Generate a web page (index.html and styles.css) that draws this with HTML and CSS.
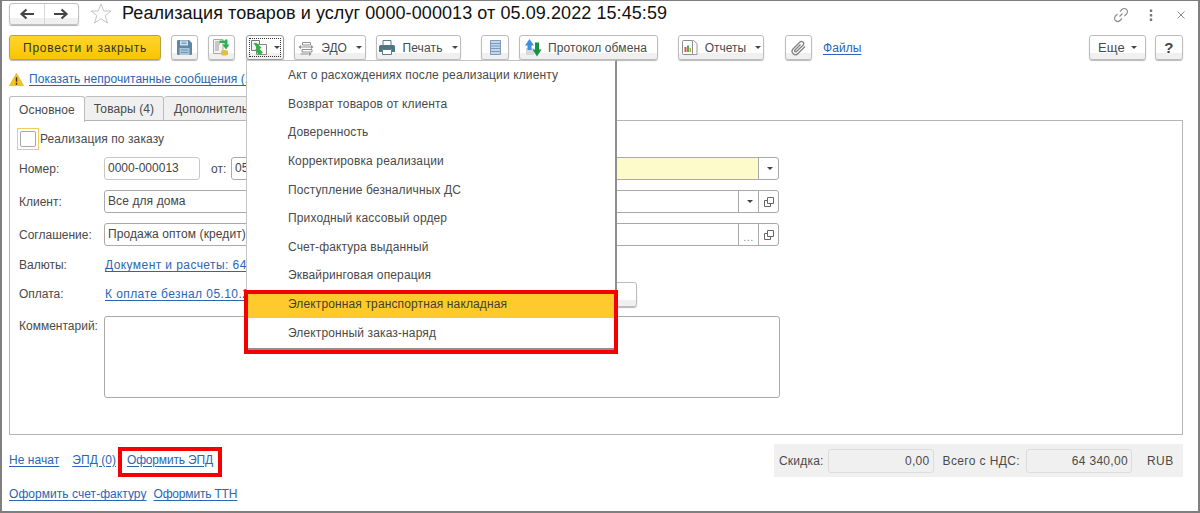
FILE: index.html
```html
<!DOCTYPE html>
<html lang="ru">
<head>
<meta charset="utf-8">
<title>Реализация товаров и услуг</title>
<link rel="stylesheet" href="styles.css">
</head>
<body>
<div class="window">
  <header class="titlebar">
    <div class="nav">
      <button class="nav-btn"><svg width="16" height="12" viewBox="0 0 16 12"><path d="M15 6H4M7.500 1.500 2.500 6l5 4.500" fill="none" stroke="#444" stroke-width="2.200"/></svg></button>
      <button class="nav-btn"><svg width="16" height="12" viewBox="0 0 16 12"><path d="M1 6h11M8.500 1.500l5 4.500-5 4.500" fill="none" stroke="#444" stroke-width="2.200"/></svg></button>
    </div>
    <svg class="star" width="24" height="24" viewBox="0 0 24 24"><path d="M12 2l2.800 7h7.200l-5.800 4.600 2.200 7.400-6.400-4.300-6.400 4.300 2.200-7.400L2 9h7.200z" fill="#fff" stroke="#c4c4c4"/></svg>
    <h1 class="title">Реализация товаров и услуг 0000-000013 от 05.09.2022 15:45:59</h1>
    <div class="win-tools">
      <svg width="16" height="16" viewBox="0 0 16 16"><path d="M6.500 9.500 9.500 6.500M7 4.500l2-2a3 3 0 0 1 4.500 4.500l-2 2M9 11.500l-2 2A3 3 0 0 1 2.500 9l2-2" fill="none" stroke="#8c8c8c" stroke-width="1.100"/></svg>
      <svg width="4" height="12" viewBox="0 0 4 12"><path d="M2 0.500v2.500M2 5v2.500M2 9.500v2.500" stroke="#777" stroke-width="2.400"/></svg>
      <svg width="10" height="10" viewBox="0 0 10 10"><path d="M1.500 1.500l7 7M8.500 1.500l-7 7" stroke="#8a8a8a" stroke-width="1"/></svg>
    </div>
  </header>

  <div class="toolbar">
    <button class="btn btn-primary">Провести и закрыть</button>
    <button class="btn btn-icon gap-10"><svg width="15" height="15" viewBox="0 0 15 15"><path d="M0 1q0-1 1-1h11l3 3v11q0 1-1 1H1q-1 0-1-1z" fill="#5f87a3"/><path d="M3 .500h8v5H3z" fill="#cfe0ec"/><path d="M4.500 2h5M4.500 3.500h5" stroke="#7fa3ba"/><path d="M2.500 8h10v7h-10z" fill="#a9c6d8"/><path d="M4 10h7M4 12.500h7" stroke="#6f97b0"/></svg></button>
    <button class="btn btn-icon gap-10"><svg width="17" height="17" viewBox="0 0 17 17"><path d="M.500.500h9.500v14H.500z" fill="#f4f4f4" stroke="#a8a8a8"/><path d="M2 3h5M2 5h5M2 7h4M2 9h4M2 11h4" stroke="#9a9a9a"/><path d="M8 12.500q0-1.500 3.500-1.500t3.500 1.500v2.500q0 1.500-3.500 1.500T8 15z" fill="#e4bf3a"/><path d="M6.500 1.500h5.500v-1h2.500v5h2l-3.500 5-3.700-5h2.200V4H6.500z" fill="#2fb04f"/></svg></button>
    <div class="menu-anchor gap-11">
      <button class="btn btn-create">
        <span class="focus-ring">
          <svg width="17" height="16" viewBox="0 0 17 16"><path d="M.500.500h8v10h-8z" fill="#f2f2f2" stroke="#777"/><path d="M5.500 4.500h10v10h-10z" fill="#fff" stroke="#888"/><path d="M2.500 3h3l5 4.500-2 1.700 3.500 3-1.800 1.800H7L4 10l2-1.800z" fill="#2fb344"/></svg>
          <i class="caret"></i>
        </span>
      </button>
      <div class="menu">
        <div class="menu-item">Акт о расхождениях после реализации клиенту</div>
        <div class="menu-item">Возврат товаров от клиента</div>
        <div class="menu-item">Доверенность</div>
        <div class="menu-item">Корректировка реализации</div>
        <div class="menu-item">Поступление безналичных ДС</div>
        <div class="menu-item">Приходный кассовый ордер</div>
        <div class="menu-item">Счет-фактура выданный</div>
        <div class="menu-item">Эквайринговая операция</div>
        <div class="menu-item is-active">Электронная транспортная накладная</div>
        <div class="menu-item">Электронный заказ-наряд</div>
        <div class="menu-mark"></div>
      </div>
    </div>
    <button class="btn gap-10 w-edo"><svg width="16" height="16" viewBox="0 0 16 16"><path d="M4.500 2.500h8v2.500h-8zM1.500 7h12M4 9.500h10v2.500H4zM2.500 14h8" fill="none" stroke="#8f8f8f"/><path d="M3 5 .5 7 3 9zM13 5l2.500 2L13 9zM11 12l2.500 2L11 16z" fill="#8f8f8f"/></svg>ЭДО<i class="caret"></i></button>
    <button class="btn gap-10 w-print"><svg width="16" height="15" viewBox="0 0 16 15"><path d="M4 .500h8v5H4z" fill="#fff" stroke="#5a7a87"/><path d="M1.500 5h13q1.500 0 1.500 1.500V12h-3V9.500H3V12H0V6.500Q0 5 1.500 5z" fill="#4f7684"/><path d="M3.500 9.500h9v5h-9z" fill="#fff" stroke="#5a7a87"/></svg>Печать<i class="caret"></i></button>
    <button class="btn btn-icon gap-20 w-28"><svg width="11" height="15" viewBox="0 0 11 15"><path d="M.500.500h10v14H.500z" fill="#c4d6ec" stroke="#7d99bd"/><path d="M1 3.500h9M1 6h9M1 8.500h9M1 11.500h9" stroke="#7d99bd"/></svg></button>
    <button class="btn gap-10 w-proto"><svg width="17" height="18" viewBox="0 0 17 18"><path d="M1 9h8v7H1z" fill="#d9d9d9"/><path d="M0 6.500 4.500 0 9 6.500H6.500V11h-4V6.500z" fill="#3f8fe6"/><path d="M7.500 10.500H10V3.500h4v7h2.500L12 17.500z" fill="#159447"/></svg>Протокол обмена</button>
    <button class="btn gap-20 w-rep"><svg width="17" height="17" viewBox="0 0 17 17"><path d="M6.500 1.500h6l3.500 3v11h-6" fill="#fff" stroke="#999"/><path d="M1.500 2.500q0-1 1-1h8q1 0 1 1v12q0 1-1 1h-8q-1 0-1-1z" fill="#fff" stroke="#8c8c8c"/><path d="M3.500 8h2v5h-2z" fill="#d9534f"/><path d="M6 6.500h2V13H6z" fill="#4caf50"/><path d="M8.500 9h1.500v4H8.500z" fill="#c9a13a"/></svg>Отчеты<i class="caret"></i></button>
    <button class="btn btn-icon gap-21"><svg width="16" height="16" viewBox="0 0 16 16"><path d="M14 6.500 7 13.500a3.200 3.200 0 0 1-5-4.500L9 2a2.200 2.200 0 0 1 3.200 3L5.500 11.500a1 1 0 0 1-1.500-1.500L9.500 4.500" fill="none" stroke="#808080" stroke-width="1.300"/></svg></button>
    <a class="link files" href="#">Файлы</a>
    <button class="btn w-more">Еще<i class="caret"></i></button>
    <button class="btn w-help">?</button>
  </div>

  <div class="notice">
    <svg width="15" height="15" viewBox="0 0 16 15"><path d="M8 1 15.500 14H.5z" fill="#f5c518" stroke="#c9a227" stroke-width=".6"/><path d="M8 5v5M8 11v2" stroke="#333" stroke-width="1.500"/></svg>
    <a class="link" href="#">Показать непрочитанные сообщения (1)</a>
  </div>

  <nav class="tabs">
    <div class="tab is-current w-main">Основное</div>
    <div class="tab w-goods">Товары (4)</div>
    <div class="tab w-extra">Дополнительно</div>
  </nav>

  <main class="panel">
    <label class="check-row"><span class="check-focus"><span class="check-box"></span></span>Реализация по заказу</label>
    <div class="row row-number">
      <span class="label">Номер:</span>
      <div class="field f-number">0000-000013</div>
      <span class="label-from">от:</span>
      <div class="field f-date">05.09.2022</div>
      <div class="combo combo-yellow"><div class="combo-main"></div><div class="combo-btn"><i class="caret"></i></div></div>
    </div>
    <div class="row row-client">
      <span class="label">Клиент:</span>
      <div class="combo">
        <div class="combo-main">Все для дома</div>
        <div class="combo-btn"><i class="caret"></i></div>
        <div class="combo-btn"><svg width="10" height="10" viewBox="0 0 10 10"><path d="M3.500.500h6v6h-6zM3 3.500H.500v6h6V7" fill="none" stroke="#666"/></svg></div>
      </div>
    </div>
    <div class="row row-deal">
      <span class="label">Соглашение:</span>
      <div class="combo">
        <div class="combo-main">Продажа оптом (кредит)</div>
        <div class="combo-btn dots">...</div>
        <div class="combo-btn"><svg width="10" height="10" viewBox="0 0 10 10"><path d="M3.500.500h6v6h-6zM3 3.500H.500v6h6V7" fill="none" stroke="#666"/></svg></div>
      </div>
    </div>
    <div class="row row-cur">
      <span class="label">Валюты:</span>
      <a class="link link-wide" href="#">Документ и расчеты: 64 340,00 RUB</a>
    </div>
    <div class="row row-pay">
      <span class="label">Оплата:</span>
      <a class="link link-wide" href="#">К оплате безнал 05.10.2022</a>
      <button class="btn w-pay">Условия оплаты</button>
    </div>
    <div class="row row-comment">
      <span class="label">Комментарий:</span>
      <div class="field f-comment"></div>
    </div>
  </main>

  <footer class="footer">
    <div class="footer-main">
      <div class="footer-links first">
        <a class="link" href="#">Не начат</a>
        <a class="link" href="#">ЭПД (0)</a>
        <span class="marked"><a class="link link-tight" href="#">Оформить ЭПД</a><span class="mark-box"></span></span>
      </div>
      <div class="totals">
        <span>Скидка:</span>
        <div class="total-field w-total">0,00</div>
        <span class="total-label">Всего с НДС:</span>
        <div class="total-field w-total">64 340,00</div>
        <span class="currency">RUB</span>
      </div>
    </div>
    <div class="footer-links second">
      <a class="link" href="#">Оформить счет-фактуру</a>
      <a class="link link-tight" href="#">Оформить ТТН</a>
    </div>
  </footer>
</div>
</body>
</html>
```

FILE: styles.css
```css
* { box-sizing: border-box; }
html, body { margin: 0; padding: 0; background: #fff; }
body { font: 12px/14px "Liberation Sans", Arial, sans-serif; color: #4a4a4a; overflow: hidden; }
button { font: inherit; color: inherit; margin: 0; }

.window {
  width: 1200px; height: 513px; position: relative;
  border: solid #7f7f7f; border-width: 1px 2px 2px 2px;
  padding: 2px 15px 0 7px;
  background: #fff;
}

/* title */
.titlebar { display: flex; align-items: center; height: 21px; }
.nav { display: flex; width: 70px; height: 22px; border: 1px solid #c0c0c0; border-radius: 3px; box-shadow: 0 1px 1px rgba(0,0,0,.3); background: linear-gradient(#fff 70%, #f0f0f0 70%); }
.nav-btn { flex: 1; border: 0; background: none; padding: 0; display: flex; align-items: center; justify-content: center; }
.nav-btn + .nav-btn { border-left: 1px solid #d8d8d8; }
.star { margin-left: 10px; }
.title { margin: 0 0 0 9px; font-size: 18px; line-height: 24px; font-weight: 400; letter-spacing: .08px; color: #111; position: relative; top: -1px; }
.win-tools { margin-left: auto; margin-right: -3px; display: flex; align-items: center; position: relative; top: 1px; }
.win-tools svg:nth-child(2) { margin-left: 20px; }
.win-tools svg:nth-child(3) { margin-left: 23px; }

/* toolbar */
.toolbar { display: flex; align-items: stretch; height: 25px; margin-top: 11px; }
.btn {
  display: flex; align-items: center; justify-content: center; gap: 6px;
  height: 25px; padding: 0;
  border: 1px solid #bcbcbc; border-radius: 3px;
  background: linear-gradient(#fff 72%, #f0f0f0 72%);
  box-shadow: 0 1px 1px rgba(0,0,0,.28);
  white-space: nowrap; letter-spacing: .15px;
}
.btn-primary { width: 152px; background: linear-gradient(#ffd52e, #fbc400); border-color: #b9a04a; color: #333; letter-spacing: .72px; }
.btn-icon { width: 27px; }
.w-28 { width: 28px; }
.btn-create { width: 38px; height: 25px; border-color: #999; padding: 2px; }
.focus-ring { display: flex; align-items: center; justify-content: center; gap: 4px; width: 100%; height: 100%; border: 1px dotted #333; }
.gap-10 { margin-left: 10px; }
.gap-11 { margin-left: 11px; }
.gap-20 { margin-left: 20px; }
.gap-21 { margin-left: 21px; }
.w-edo { width: 72px; gap: 7px; letter-spacing: 0; }
.w-print { width: 85px; gap: 7px; }
.w-proto { width: 139px; padding-right: 5px; letter-spacing: .1px; }
.w-rep { width: 86px; letter-spacing: 0; gap: 7px; padding-right: 0; }
.w-more { width: 57px; margin-left: auto; font-size: 13px; gap: 4px; }
.w-help { width: 28px; margin-left: 9px; font-size: 15px; font-weight: 700; color: #444; }
.caret { display: inline-block; width: 0; height: 0; border: 3px solid transparent; border-top: 3px solid #444; border-bottom: 0; margin-left: 2px; }

.link { color: #2a66b5; text-decoration: underline; text-underline-offset: 2px; white-space: nowrap; letter-spacing: .05px; }
.link-wide { letter-spacing: .42px; margin-left: 1px; }
.link-tight { letter-spacing: -.18px; }
.files { margin-left: 11px; align-self: center; }

/* popup menu */
.menu-anchor { position: relative; }
.menu {
  position: absolute; left: 0; top: 25px; z-index: 5; width: 371px; padding-top: .2px;
  height: 290px; background: #fff;
  border: 1px solid #c4c4c4; border-right: 2px solid #8f8f8f; border-bottom: 2px solid #8f8f8f;
}
.menu-item { height: 28.600px; line-height: 28.600px; padding-left: 41px; letter-spacing: .13px; color: #4a4a4a; white-space: nowrap; }
.menu-item.is-active { background: linear-gradient(transparent 3px, #ffca2e 3px, #ffca2e 28px, transparent 28px); color: #454030; }
.menu-mark { position: absolute; left: -3px; top: 229px; width: 374px; height: 64px; border: 4px solid #f40000; }

/* notice */
.notice { display: flex; align-items: center; gap: 5px; height: 20px; margin-top: 9px; }

/* tabs */
.tabs { display: flex; height: 25px; margin-top: 7px; }
.tab { height: 25px; display: flex; align-items: center; justify-content: center; border: 1px solid #bdbdbd; border-left: 0; border-radius: 3px 3px 0 0; background: #f0f0f0; letter-spacing: .1px; }
.tab.is-current { background: #fff; border-left: 1px solid #bdbdbd; border-bottom: 0; height: 26px; position: relative; z-index: 1; }
.w-main { width: 76px; }
.w-goods { width: 79px; }
.w-extra { width: 110px; justify-content: flex-start; padding-left: 10px; }

/* form panel */
.panel { height: 315px; border: 1px solid #b5b5b5; padding: 7px 0 0 9px; margin-top: 0; position: relative; top: -1px; }
.check-row { display: flex; align-items: center; height: 22px; letter-spacing: .1px; }
.check-focus { width: 22px; height: 22px; margin-left: -2px; margin-right: 1px; border: 1px solid #f3cc5e; padding: 2px; display: block; }
.check-box { display: block; width: 16px; height: 16px; border: 1px solid #a8a8a8; border-radius: 2px; }
.row { display: flex; align-items: center; width: 760px; }
.label { width: 85px; flex: none; }
.label-from { width: 31px; flex: none; padding-left: 11px; }
.row-number { height: 23px; margin-top: 7px; }
.row-client { height: 23px; margin-top: 10px; }
.row-deal { height: 23px; margin-top: 10px; }
.row-cur { height: 16px; margin-top: 11px; }
.row-pay { height: 26px; margin-top: 8px; }
.row-comment { align-items: flex-start; margin-top: 9px; height: 82px; }
.row-comment .label { padding-top: 3px; }
.field { height: 23px; border: 1px solid #c8c8c8; border-radius: 3px; padding: 3px 3px; line-height: 15px; color: #444; white-space: nowrap; overflow: hidden; }
.f-number { width: 96px; }
.f-date { width: 120px; border-color: #aaa; }
.f-comment { width: 676px; height: 82px; flex: none; border-color: #aaa; }
.combo { flex: 1; display: flex; height: 23px; border: 1px solid #aaa; border-radius: 3px; overflow: hidden; }
.combo-main { flex: 1; padding: 0 3px; line-height: 21px; letter-spacing: .1px; color: #444; white-space: nowrap; }
.combo-btn { width: 20px; flex: none; display: flex; align-items: center; justify-content: center; border-left: 1px solid #aaa; }
.combo-yellow { margin-left: 10px; }
.combo-yellow .combo-main { background: #fefbcb; }
.dots { color: #888; letter-spacing: .5px; font-size: 11px; padding-top: 4px; }
.w-pay { width: 142px; margin-left: auto; margin-right: 142px; }

/* footer */
.footer { position: relative; top: -1px; }
.footer-main { display: flex; align-items: center; justify-content: space-between; height: 33px; margin-top: 9px; }
.footer-links { display: flex; gap: 13px; }
.first { padding-bottom: 2px; }
.marked { position: relative; margin-left: -2px; }
.mark-box { position: absolute; left: -9px; top: -6px; width: 104px; height: 30px; border: 4px solid #f40000; }
.totals { display: flex; align-items: center; width: 409px; height: 33px; padding-left: 5px; background: #f0f0f0; letter-spacing: .2px; }
.total-field { height: 24px; border: 1px solid #dcdcdc; border-radius: 3px; text-align: right; padding: 4px 3px; line-height: 14px; background: #f0f0f0; letter-spacing: .3px; }
.w-total { width: 106px; margin-left: 4px; }
.total-label { margin-left: 9px; letter-spacing: .37px; }
.total-field + .total-label + .total-field { margin-left: 6px; }
.currency { margin-left: 15px; letter-spacing: .5px; }
.second { margin-top: 10px; gap: 7px; height: 16px; }
```
